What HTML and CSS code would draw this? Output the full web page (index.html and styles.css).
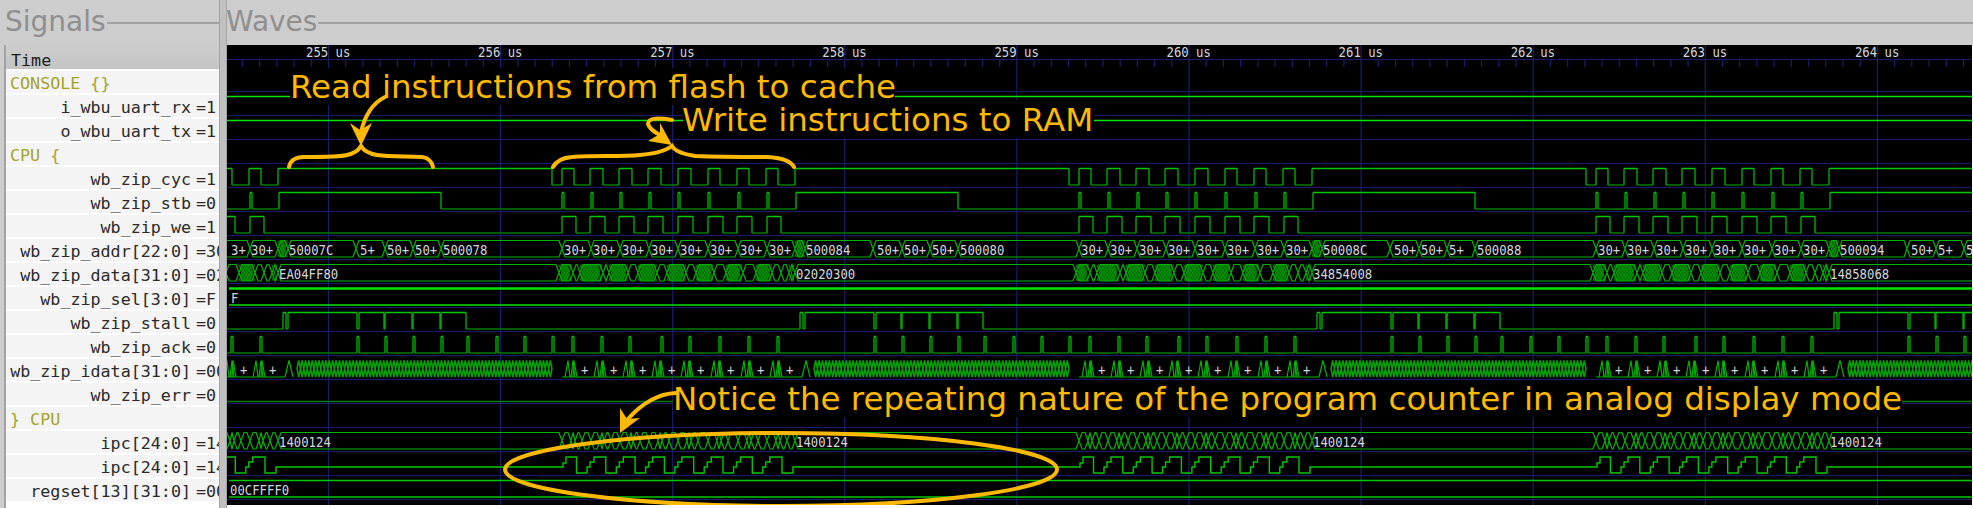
FILE: index.html
```html
<!DOCTYPE html>
<html lang="en">
<head>
    <meta charset="UTF-8">
    <title>GTKWave - Signals and Waves</title>
    <link rel="stylesheet" href="styles.css">
</head>
<body>
    <div class="app">
        <div class="signals">
            <div class="pane-head">
                <span class="pane-title">Signals</span>
                <span class="pane-rule"></span>
            </div>
            <div class="frame">
                <div class="time-row">Time</div>
                <div class="row group">CONSOLE {}</div>
                <div class="row"><span class="name">i_wbu_uart_rx</span><span class="val">=1</span></div>
                <div class="row"><span class="name">o_wbu_uart_tx</span><span class="val">=1</span></div>
                <div class="row group">CPU {</div>
                <div class="row"><span class="name">wb_zip_cyc</span><span class="val">=1</span></div>
                <div class="row"><span class="name">wb_zip_stb</span><span class="val">=0</span></div>
                <div class="row"><span class="name">wb_zip_we</span><span class="val">=1</span></div>
                <div class="row"><span class="name">wb_zip_addr[22:0]</span><span class="val">=30</span></div>
                <div class="row"><span class="name">wb_zip_data[31:0]</span><span class="val">=02</span></div>
                <div class="row"><span class="name">wb_zip_sel[3:0]</span><span class="val">=F</span></div>
                <div class="row"><span class="name">wb_zip_stall</span><span class="val">=0</span></div>
                <div class="row"><span class="name">wb_zip_ack</span><span class="val">=0</span></div>
                <div class="row"><span class="name">wb_zip_idata[31:0]</span><span class="val">=00</span></div>
                <div class="row"><span class="name">wb_zip_err</span><span class="val">=0</span></div>
                <div class="row group">} CPU</div>
                <div class="row"><span class="name">ipc[24:0]</span><span class="val">=14</span></div>
                <div class="row"><span class="name">ipc[24:0]</span><span class="val">=14</span></div>
                <div class="row"><span class="name">regset[13][31:0]</span><span class="val">=00</span></div>
            </div>
        </div>
        <div class="sash"></div>
        <div class="waves">
            <div class="pane-head">
                <span class="pane-title">Waves</span>
                <span class="pane-rule"></span>
            </div>
            <svg id="trace" class="trace" viewBox="227 45 1745 460" width="1745" height="460"></svg>
        </div>
    </div>
    <script src="script.js"></script>
</body>
</html>
```

FILE: styles.css
```css
body {
    margin: 0;
    background-color: #fff;
}
.app {
    display: flex;
    height: 508px;
    overflow: hidden;
}
.signals {
    width: 219px;
    flex: none;
    background-color: #cdcdcd;
}
.sash {
    width: 6px;
    flex: none;
    background-color: #c0c0c0;
    border-left: 1px solid #a4a4a4;
    border-right: 1px solid #a4a4a4;
}
.waves {
    flex: 1;
    min-width: 0;
    background: linear-gradient(#cdcdcd 45px, #fff 45px);
}
.pane-head {
    height: 45px;
    display: flex;
    align-items: flex-start;
}
.pane-title {
    font-family: "DejaVu Sans", sans-serif;
    font-size: 28px;
    line-height: 32px;
    margin-top: 6px;
    margin-left: -1px;
    color: #8f8f8f;
}
.signals .pane-title {
    margin-left: 5px;
}
.pane-rule {
    flex: 1;
    height: 2px;
    margin-top: 22px;
    margin-left: 1px;
    background-color: #a2a2a2;
}
.frame {
    margin-left: 4px;
    border-left: 2px solid #a2a2a2;
    font-family: "DejaVu Sans Mono", monospace;
    font-size: 16.7px;
    color: #2a2a2a;
    background-color: #fff;
    height: 463px;
}
.time-row {
    height: 24px;
    line-height: 30px;
    padding-left: 5px;
    background: linear-gradient(#cdcdcd, #c4c4c4);
    color: #1c1c1c;
}
.row {
    display: flex;
    height: 22px;
    line-height: 25px;
    border-top: 2px solid #fff;
    background-color: #f4f4f4;
    overflow: hidden;
    white-space: nowrap;
}
.group {
    padding-left: 4px;
    color: #a3a32a;
}
.name {
    width: 185px;
    flex: none;
    text-align: right;
}
.val {
    margin-left: 5px;
    width: 23px;
    overflow: hidden;
}
.trace {
    display: block;
    background-color: #000;
}
.grid {
    stroke: #1c1c6e;
    stroke-width: 1.2;
    fill: none;
}
.hi {
    stroke: #00c800;
    stroke-width: 1.4;
    fill: none;
}
.lo {
    stroke: #007a00;
    stroke-width: 1.4;
    fill: none;
}
.edge {
    stroke: #00aa00;
    stroke-width: 1.4;
    fill: none;
}
.bright {
    stroke: #00e600;
    stroke-width: 1.4;
    fill: none;
}
.thick {
    stroke: #00e600;
    stroke-width: 2.4;
    fill: none;
}
.bus {
    stroke: #00b400;
    stroke-width: 1.2;
    fill: none;
}
.mesh {
    stroke: #00a800;
    stroke-width: 0.8;
    fill: none;
}
.busy {
    stroke: #00a400;
    stroke-width: 1.5;
    fill: none;
}
.label {
    font-family: "DejaVu Sans Mono", monospace;
    font-size: 14px;
    fill: #d4d8dc;
}
.blank {
    fill: #000;
}
.note {
    font-family: "DejaVu Sans", sans-serif;
    font-size: 32.5px;
    fill: #ffb900;
}
.ink {
    stroke: #ffb900;
    stroke-width: 4;
    stroke-linecap: round;
    fill: none;
}
.ink-head {
    fill: #ffb900;
}
```

FILE: script.js
```js
var svg = document.getElementById("trace");
var NS = "http://www.w3.org/2000/svg";
var bases = [35, 552, 1069, 1586];
var pulses = [10, 39, 68, 97, 126, 156, 186, 215];

function add(tag, attrs, text) {
    var el = document.createElementNS(NS, tag);
    for (var k in attrs) el.setAttribute(k, attrs[k]);
    if (text) el.textContent = text;
    svg.appendChild(el);
    return el;
}

function line(x1, y1, x2, y2, cls) {
    add("path", { d: "M" + x1 + " " + y1 + "L" + x2 + " " + y2, "class": cls });
}

// top and bottom of the trace in row i
function rowTop(i) { return 96.5 + i * 24; }
function rowBot(i) { return 113 + i * 24; }
function rowMid(i) { return 105 + i * 24; }

function repeat(rels) {
    var out = [];
    bases.forEach(function (b) {
        rels.forEach(function (r) { out.push(b + r); });
    });
    return out;
}

// digital trace, toggling at each x in edges
function digital(i, start, edges) {
    var level = start, x = 227, hi = "", lo = "", ed = "";
    edges.concat([1980]).forEach(function (e) {
        if (e > 227) {
            var y = level ? rowTop(i) : rowBot(i);
            var seg = "M" + x + " " + y + "H" + e;
            if (level) hi += seg; else lo += seg;
            ed += "M" + e + " " + rowTop(i) + "V" + rowBot(i);
            x = e;
        }
        level = !level;
    });
    add("path", { d: lo, "class": "lo" });
    add("path", { d: ed, "class": "edge" });
    add("path", { d: hi, "class": "hi" });
}

function hex(a, b, i) {
    var t = rowTop(i), u = rowBot(i), m = (t + u) / 2;
    var s = Math.min(3, (b - a) / 2);
    return "M" + a + " " + m + "L" + (a + s) + " " + t + "H" + (b - s) + "L" + b + " " + m +
        "L" + (b - s) + " " + u + "H" + (a + s) + "Z";
}

// many short values in a row: just crossings from rail to rail
function cross(i, from, to, step) {
    var d = "", t = rowTop(i), u = rowBot(i);
    for (var x = from; x < to; x += step) {
        d += "M" + x + " " + t + "L" + (x + 5) + " " + u + "M" + (x + 5) + " " + t + "L" + x + " " + u;
    }
    add("path", { d: d, "class": "mesh" });
}

function bus(i, stops, cls) {
    var d = "";
    for (var n = 0; n < stops.length - 1; n++) d += hex(stops[n], stops[n + 1], i);
    add("path", { d: d, "class": cls || "bus" });
}

function dense(from, to, step) {
    var out = [];
    for (var x = from; x <= to; x += step) out.push(x);
    return out;
}

// mono text is narrower in the capture than the font's own advance
function text(x, y, str) {
    if (x < 224 || !str) return;
    add("text", { x: x, y: y, "class": "label", textLength: str.length * 7.4, lengthAdjust: "spacingAndGlyphs" }, str);
}

function label(x, i, str) {
    text(x, rowMid(i) + 5.5, str);
}

// vertical grid and ruler
line(227, 59.5, 1973, 59.5, "grid");
for (var n = 0; n < 10; n++) {
    var major = 328.5 + n * 172.1;
    line(major, 45, major, 505, "grid");
    text(major - 22.5, 57, (255 + n) + " us");
}
for (var t = 0; t < 110; t++) {
    if (t % 10 == 5) continue;
    var tx = 328.5 + (t - 5) * 17.21;
    line(tx, 60, tx, 67, "grid");
}
for (var r = 0; r < 18; r++) {
    line(227, 91.5 + r * 24, 1973, 91.5 + r * 24, "grid");
}

// i_wbu_uart_rx, o_wbu_uart_tx
line(227, 96.5, 1973, 96.5, "bright");
line(227, 120.5, 1973, 120.5, "bright");

// wb_zip_cyc
digital(3, true, repeat([0, 10, 22, 38, 51, 67, 80, 96, 109, 126, 139, 156, 168, 185, 197, 214, 226, 243]));

// wb_zip_stb
var stb = [];
pulses.forEach(function (p) { stb.push(p, p + 2); });
digital(4, false, repeat(stb.concat([244, 406])));

// wb_zip_we
digital(5, false, repeat([10, 24, 38, 53, 67, 82, 96, 111, 126, 141, 156, 171, 185, 200, 215, 229]));

// wb_zip_addr
var addr = [];
bases.forEach(function (b) {
    pulses.forEach(function (p) { addr.push(b + p); });
    addr.push(b + 243, b + 253, b + 321, b + 350, b + 378, b + 406);
    cross(6, b + 243, b + 249, 1.5);
});
addr.sort(function (a, b) { return a - b; });
bus(6, addr.concat([2000]));
label(231, 6, "3+");
label(251, 6, "30+");
var addrLabels = [
    ["50007C", "5+", "50+", "50+", "500078"],
    ["500084", "50+", "50+", "50+", "500080"],
    ["50008C", "50+", "50+", "5+", "500088"],
    ["500094", "50+", "5+", "50+", "500090"]
];
bases.forEach(function (b, k) {
    [254, 325, 352, 380, 408].forEach(function (o, j) { label(b + o, 6, addrLabels[k][j]); });
    if (k > 0) pulses.forEach(function (p) { label(b + p + 2, 6, "30+"); });
});

// wb_zip_data
var groups = [[7, 21], [28, 51], [57, 76], [86, 105], [115, 134], [144, 162], [174, 191], [204, 220], [237, 243]];
var dataStops = [];
bases.forEach(function (b) {
    groups.forEach(function (g, k) {
        cross(7, b + g[0], b + g[1] - 5, 1.5);
        dataStops.push(b + g[0], b + g[1]);
        if (k == groups.length - 2) dataStops.push(b + 229);
    });
});
bus(7, dataStops.concat([2000]));
["EA04FF80", "02020300", "34854008", "14858068"].forEach(function (s, k) {
    label(bases[k] + 244, 7, s);
});

// wb_zip_sel
line(229, 288.5, 1973, 288.5, "thick");
line(229, 305, 1973, 305, "bright");
label(231, 8, "F");

// wb_zip_stall
digital(9, false, repeat([248, 251, 253, 322, 324, 349, 350, 377, 378, 405, 406, 431]));

// wb_zip_ack
var ack = [];
[-28, 0, 20, 49, 77, 109, 137, 167, 196, 225, 322, 350, 378, 406, 432, 461].forEach(function (a) {
    ack.push(a, a + 2);
});
digital(10, false, repeat(ack));

// wb_zip_idata
var tris = "M227 " + rowBot(11) + "H245";
bases.forEach(function (b) {
    bus(11, dense(b + 262, b + 520, 3.4), "busy");
    pulses.forEach(function (p) {
        var x = b + p + 3;
        tris += "M" + x + " " + rowBot(11) + "L" + (x + 3) + " " + rowTop(11) + "L" + (x + 5) + " " + rowBot(11);
        tris += "M" + (x + 6) + " " + rowBot(11) + "L" + (x + 8) + " " + rowTop(11) + "L" + (x + 10) + " " + rowBot(11);
        tris += "M" + (x + 8) + " " + rowBot(11) + "L" + (x + 9) + " " + rowTop(11) + "L" + (x + 12) + " " + rowBot(11);
        label(x + 16, 11, "+");
    });
    tris += "M" + (b + 250) + " " + rowBot(11) + "L" + (b + 254) + " " + rowTop(11) + "L" + (b + 258) + " " + rowBot(11);
    tris += "M" + (b + 10) + " " + rowBot(11) + "H" + (b + 250);
});
add("path", { d: tris, "class": "bus" });

// wb_zip_err
line(227, 401.5, 1973, 401.5, "lo");

// ipc, bus view
var ipcStops = [];
bases.forEach(function (b) {
    pulses.forEach(function (p) {
        ipcStops.push(b + p, b + p + 9, b + p + 13, b + p + 20);
    });
    ipcStops.push(b + 243);
});
bus(14, ipcStops.concat([2000]));
bases.forEach(function (b) {
    label(b + 244, 14, "1400124");
});

// ipc, analog view
var pts = "M227 457", lastX = 227;
function stepTo(x, y) {
    if (x <= lastX) return;
    pts += "H" + x + "V" + y;
    lastX = x;
}
bases.forEach(function (b) {
    stepTo(b + 11, 463);
    stepTo(b + 14, 457);
    for (var k = 0; k < 7; k++) {
        var o = b + k * 29.3;
        stepTo(o + 24.5, 473);
        stepTo(o + 35, 467);
        stepTo(o + 38, 462);
        stepTo(o + 42, 457);
    }
    stepTo(b + 230, 473);
    stepTo(b + 241, 467);
});
add("path", { d: pts + "H1980", "class": "hi" });

// regset
line(229, 480.5, 1973, 480.5, "hi");
line(229, 497, 1973, 497, "hi");
label(230, 16, "00CFFFF0");

// the pasted notes blank out whatever is under them
add("rect", { x: 290, y: 68, width: 605, height: 37, "class": "blank" });
add("rect", { x: 683, y: 100, width: 411, height: 38, "class": "blank" });
add("rect", { x: 673, y: 380, width: 1229, height: 37, "class": "blank" });

add("text", { x: 290, y: 98, "class": "note" }, "Read instructions from flash to cache");
add("text", { x: 682, y: 131, "class": "note" }, "Write instructions to RAM");
add("text", { x: 673, y: 410, "class": "note" }, "Notice the repeating nature of the program counter in analog display mode");

// hand drawn braces and arrows
add("path", { "class": "ink", d: "M289 167Q291 157 304 157C325 157 340 157 347 155Q357 153 361 146Q365 153 377 155C390 157 410 156 422 157Q431 158 433 167" });
add("path", { "class": "ink", d: "M385 97Q367 106 361 132" });
add("path", { "class": "ink-head", d: "M361 146L350 123L360 130L372 123Z" });

add("path", { "class": "ink", d: "M553 167Q558 158 572 157C590 155 620 157 640 155Q663 153 672 146Q676 153 695 156C720 157 750 157 767 157Q789 158 794 167" });
add("path", { "class": "ink", d: "M672 120C660 118 648 117 648 124Q650 130 660 135" });
add("path", { "class": "ink-head", d: "M672 145L660 123L660 134L648 141Z" });

add("path", { "class": "ink", d: "M676 393Q650 394 627 420" });
add("path", { "class": "ink-head", d: "M620 433L620 408L627 419L640 418Z" });

add("ellipse", { cx: 781, cy: 469.5, rx: 276, ry: 36.5, "class": "ink" });
```
